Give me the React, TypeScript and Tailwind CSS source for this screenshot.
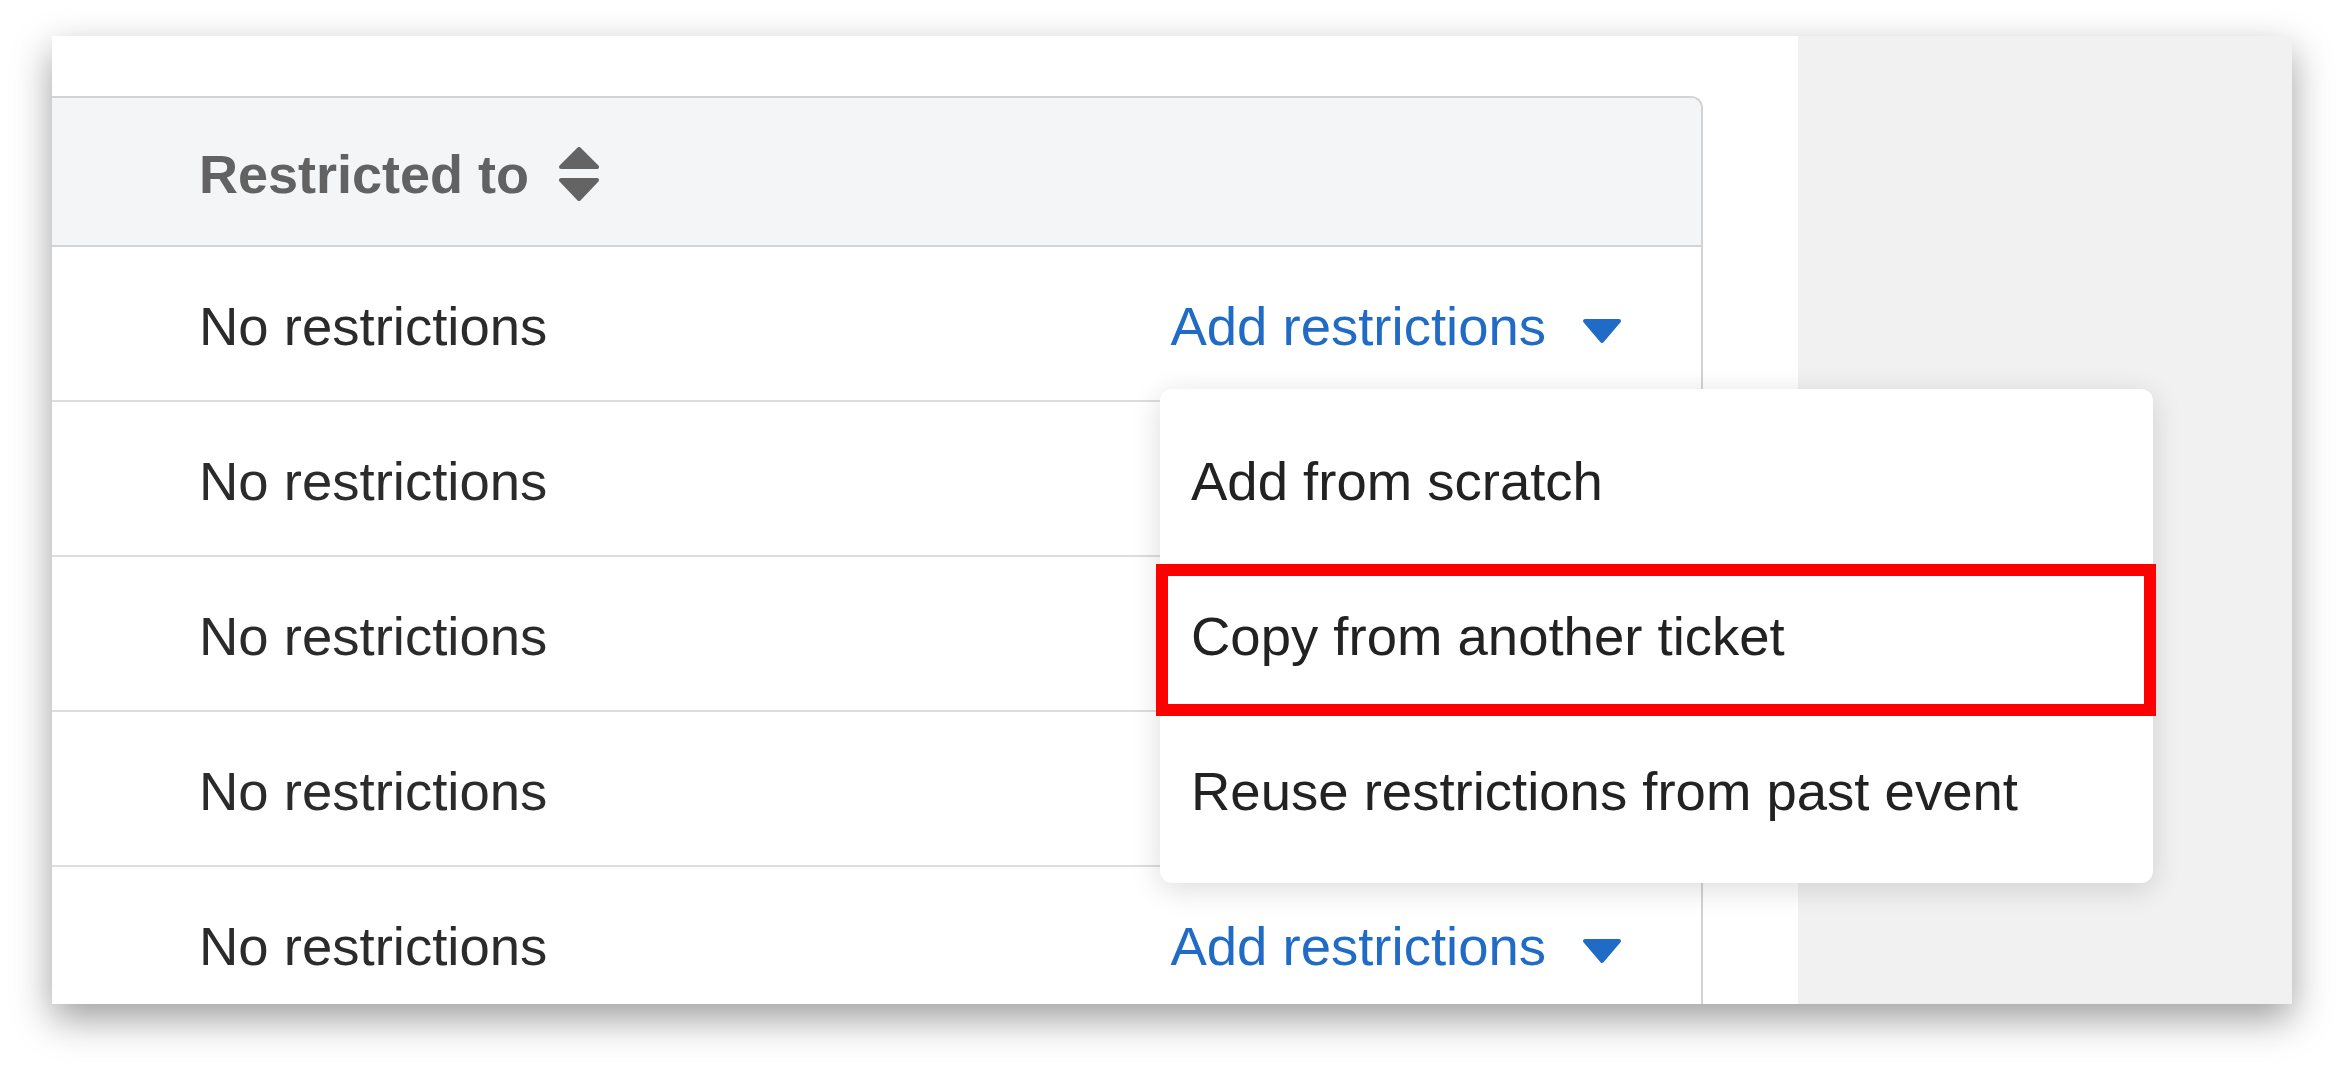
import React from "react";

function SortIcon() {
  return (
    <svg width="40" height="54" viewBox="0 0 40 54" className="ml-[30px] shrink-0">
      <path d="M20 2 L38 20 H2 Z" fill="#646464" stroke="#646464" strokeWidth="4" strokeLinejoin="round" />
      <path d="M2 33 H38 L20 52 Z" fill="#646464" stroke="#646464" strokeWidth="4" strokeLinejoin="round" />
    </svg>
  );
}

function Caret() {
  return (
    <svg width="40" height="26" viewBox="0 0 40 26" className="ml-[36px] mt-[6px] shrink-0">
      <path d="M3 3 H37 L20 23 Z" fill="#1f6bc5" stroke="#1f6bc5" strokeWidth="4" strokeLinejoin="round" />
    </svg>
  );
}

export default function App() {
  const rows = [true, false, false, false, true];
  return (
    <div className="w-[2344px] h-[1072px] bg-white pl-[52px] pt-[36px] overflow-hidden font-['Liberation_Sans',Arial,sans-serif]">
      <div className="relative w-[2240px] h-[968px] flex bg-white shadow-[0_15px_36px_rgba(0,0,0,0.38)]">
        <div className="w-[1746px] pt-[60px] overflow-hidden">
          <div className="w-[1651px] border-t-2 border-r-2 border-[#d2d3d5] rounded-tr-[12px] overflow-hidden">
            <div className="h-[149px] bg-[#f4f5f7] border-b-2 border-[#d2d3d5] flex items-center pl-[147px] pt-[4px]">
              <span className="text-[54px] leading-none font-bold text-[#626262]">Restricted to</span>
              <SortIcon />
            </div>
            {rows.map((showAdd, i) => (
              <div
                key={i}
                className="h-[155px] border-b-2 border-[#dcdddf] flex items-center justify-between pl-[147px] pr-[79px] pt-[8px]"
              >
                <span className="text-[54.5px] leading-none text-[#2b2b2b]">No restrictions</span>
                {showAdd && (
                  <div className="flex items-center">
                    <span className="text-[54.5px] leading-none text-[#1f6bc5]">Add restrictions</span>
                    <Caret />
                  </div>
                )}
              </div>
            ))}
          </div>
        </div>
        <div className="flex-1 bg-[#f1f1f1]" />

        <div className="absolute left-[1108px] top-[353px] w-[993px] h-[494px] bg-white rounded-[12px] shadow-[0_6px_30px_rgba(0,0,0,0.14)] pt-[12px]">
          {["Add from scratch", "Copy from another ticket", "Reuse restrictions from past event"].map((t) => (
            <div key={t} className="h-[155px] flex items-center pl-[31px] pt-[8px]">
              <span className="text-[54.5px] leading-none text-[#222222]">{t}</span>
            </div>
          ))}
        </div>

        <div className="absolute left-[1104px] top-[528px] w-[1000px] h-[152px] border-[12px] border-[#ff0000] pointer-events-none" />
      </div>
    </div>
  );
}
